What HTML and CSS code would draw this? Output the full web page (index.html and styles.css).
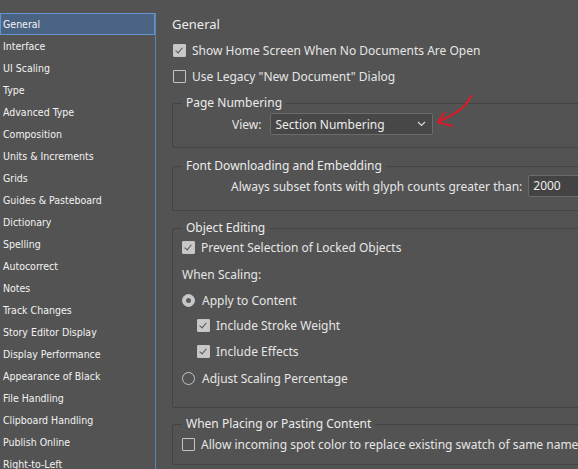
FILE: index.html
```html
<!DOCTYPE html>
<html lang="en">
<head>
  <meta charset="UTF-8">
  <title>Preferences</title>
  <link rel="stylesheet" href="styles.css">
</head>
<body>

  <!-- Category list -->
  <ul class="sidebar">
    <li class="active">General</li>
    <li>Interface</li>
    <li>UI Scaling</li>
    <li>Type</li>
    <li>Advanced Type</li>
    <li>Composition</li>
    <li>Units &amp; Increments</li>
    <li>Grids</li>
    <li>Guides &amp; Pasteboard</li>
    <li>Dictionary</li>
    <li>Spelling</li>
    <li>Autocorrect</li>
    <li>Notes</li>
    <li>Track Changes</li>
    <li>Story Editor Display</li>
    <li>Display Performance</li>
    <li>Appearance of Black</li>
    <li>File Handling</li>
    <li>Clipboard Handling</li>
    <li>Publish Online</li>
    <li>Right-to-Left</li>
  </ul>

  <div class="main">
    <h2>General</h2>

    <label class="row top-row"><span class="check on"></span>Show Home Screen When No Documents Are Open</label>
    <label class="row top-row"><span class="check"></span>Use Legacy "New Document" Dialog</label>

    <fieldset class="group group-pages">
      <legend>Page Numbering</legend>
      <div class="field view-field">
        <span class="field-label">View:</span>
        <div class="select">
          <span>Section Numbering</span>
          <svg class="chevron" width="9" height="6" viewBox="0 0 9 6"><path d="M1 1l3.5 3.5L8 1" fill="none" stroke="#d8d8d8" stroke-width="1.2"/></svg>
        </div>
      </div>
    </fieldset>

    <fieldset class="group group-fonts">
      <legend>Font Downloading and Embedding</legend>
      <div class="field subset-field">
        <span class="field-label">Always subset fonts with glyph counts greater than:</span>
        <div class="text-input">2000</div>
      </div>
    </fieldset>

    <fieldset class="group group-objects">
      <legend>Object Editing</legend>
      <label class="row"><span class="check on"></span>Prevent Selection of Locked Objects</label>
      <div class="row caption">When Scaling:</div>
      <label class="row radio-row"><span class="radio on"></span>Apply to Content</label>
      <label class="row sub stroke-row"><span class="check on"></span>Include Stroke Weight</label>
      <label class="row sub effects-row"><span class="check on"></span>Include Effects</label>
      <label class="row radio-row adjust-row"><span class="radio"></span>Adjust Scaling Percentage</label>
    </fieldset>

    <fieldset class="group group-paste">
      <legend>When Placing or Pasting Content</legend>
      <label class="row"><span class="check"></span>Allow incoming spot color to replace existing swatch of same name</label>
    </fieldset>
  </div>

  <!-- Annotation arrow -->
  <svg class="annotation" width="60" height="40" viewBox="0 0 60 40">
    <path d="M47 5 C43 14 36 21 14 31" fill="none" stroke="#d21f2b" stroke-width="2.2" stroke-linecap="round"/>
    <path d="M20 22 L14 31 L28 35" fill="none" stroke="#d21f2b" stroke-width="2.2" stroke-linecap="round" stroke-linejoin="round"/>
  </svg>

</body>
</html>
```

FILE: styles.css
```css
* {
  margin: 0;
  padding: 0;
  box-sizing: border-box;
}

body {
  background: #535353;
  color: #e6e6e6;
  font-family: "Noto Sans", "Open Sans", sans-serif;
  font-size: 12px;
  width: 578px;
  height: 469px;
  overflow: hidden;
  display: flex;
  align-items: flex-start;
}

/* sidebar */

.sidebar {
  list-style: none;
  width: 156px;
  flex: none;
  margin-top: 13px;
  height: 470px;
  border-right: 1px solid #5b83b3;
  font-family: "DejaVu Sans Condensed", "Liberation Sans", Arial, sans-serif;
  font-size: 10.5px;
  color: #f2f2f2;
}

.sidebar li {
  height: 22px;
  line-height: 22px;
  padding-left: 3px;
  white-space: nowrap;
}

.sidebar li.active {
  background: #4b6382;
  border: 1px solid #6395cf;
  line-height: 20px;
  padding-left: 2px;
}

/* main column */

.main {
  flex: none;
  width: 430px;
  margin-left: 16px;
  padding-top: 14px;
}

h2 {
  font-size: 13px;
  font-weight: normal;
  height: 20px;
  line-height: 20px;
  color: #ececec;
}

.row {
  display: flex;
  align-items: center;
  height: 20px;
  white-space: nowrap;
}

.top-row {
  margin-top: 6px;
  padding-left: 1px;
}

.check {
  width: 13px;
  height: 13px;
  border: 1px solid #c4c4c4;
  border-radius: 1px;
  margin-right: 6px;
  flex: none;
  position: relative;
}

.check.on {
  background: #c8c8c8;
}

.check.on::after {
  content: "";
  position: absolute;
  left: 3px;
  top: 1px;
  width: 3px;
  height: 6px;
  border-right: 1.5px solid #555;
  border-bottom: 1.5px solid #555;
  transform: rotate(40deg);
}

.radio {
  width: 13px;
  height: 13px;
  border: 1px solid #c4c4c4;
  border-radius: 50%;
  margin-right: 7px;
  flex: none;
  position: relative;
}

.radio.on {
  background: #c8c8c8;
}

.radio.on::after {
  content: "";
  position: absolute;
  left: 3px;
  top: 3px;
  width: 5px;
  height: 5px;
  border-radius: 50%;
  background: #5a5a5a;
}

/* group boxes */

.group {
  border: 1px solid #444444;
  border-radius: 2px;
  padding: 0 0 0 9px;
  min-width: 0;
}

.group legend {
  padding: 0 4px;
  line-height: 18px;
  color: #ececec;
}

.group-pages {
  margin-top: 8px;
  padding-top: 1px;
  padding-bottom: 12px;
}

.group-fonts {
  margin-top: 9px;
  padding-bottom: 13px;
}

.group-objects {
  margin-top: 8px;
  padding-bottom: 19px;
}

.group-paste {
  margin-top: 7px;
  padding-top: 1px;
  padding-bottom: 10px;
}

.field {
  display: flex;
  align-items: center;
  height: 22px;
  white-space: nowrap;
}

.view-field {
  padding-left: 50px;
}

.view-field .field-label {
  margin-right: 9px;
}

.subset-field {
  padding-left: 49px;
}

.field-label {
  margin-right: 6px;
}

.select {
  width: 163px;
  height: 22px;
  background: #474747;
  border: 1px solid #6b6b6b;
  border-radius: 2px;
  display: flex;
  align-items: center;
  justify-content: space-between;
  padding: 0 6px 0 4px;
  color: #ececec;
}

.text-input {
  width: 80px;
  height: 22px;
  background: #434343;
  border: 1px solid #6b6b6b;
  border-radius: 2px;
  line-height: 20px;
  padding-left: 4px;
  color: #ececec;
}

.caption {
  margin-top: 7px;
}

.radio-row {
  margin-top: 6px;
}

.sub {
  padding-left: 15px;
}

.stroke-row {
  margin-top: 5px;
}

.effects-row {
  margin-top: 6px;
}

.adjust-row {
  margin-top: 7px;
}

.annotation {
  position: absolute;
  left: 424px;
  top: 91px;
}
```
